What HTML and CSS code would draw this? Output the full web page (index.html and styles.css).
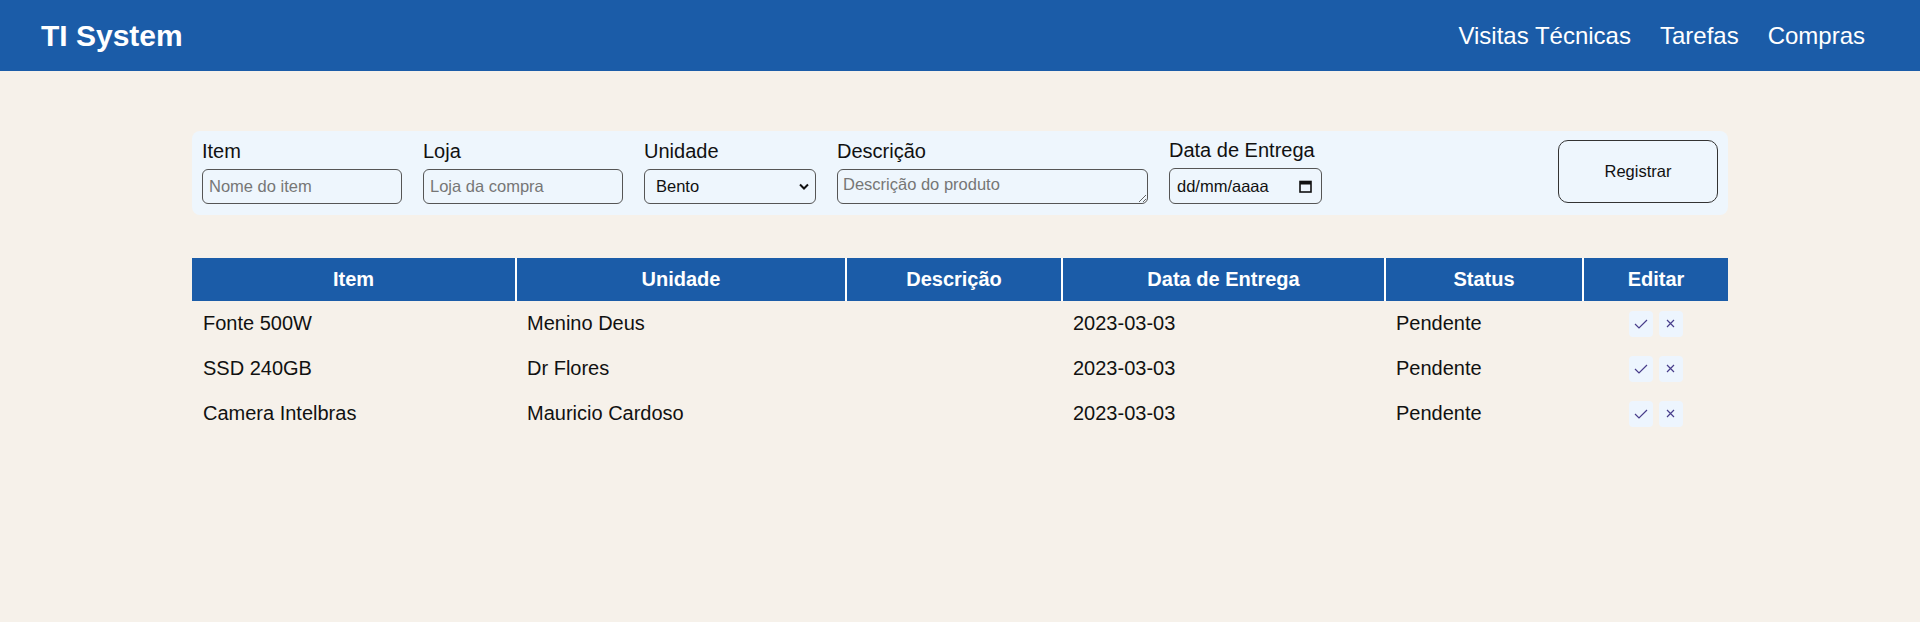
FILE: index.html
```html
<!DOCTYPE html>
<html lang="pt-BR">
<head>
<meta charset="utf-8">
<title>TI System</title>
<link rel="stylesheet" href="styles.css">
</head>
<body>
<header class="topbar">
  <h1 class="brand">TI System</h1>
  <nav class="nav">
    <a href="#">Visitas Técnicas</a>
    <a href="#">Tarefas</a>
    <a href="#">Compras</a>
  </nav>
</header>
<main class="container">
  <form class="panel">
    <div class="field">
      <label class="label">Item</label>
      <input class="control w-item" type="text" placeholder="Nome do item">
    </div>
    <div class="field">
      <label class="label">Loja</label>
      <input class="control w-loja" type="text" placeholder="Loja da compra">
    </div>
    <div class="field">
      <label class="label">Unidade</label>
      <span class="select-wrap">
        <select class="control w-unidade">
          <option>Bento</option>
          <option>Menino Deus</option>
          <option>Dr Flores</option>
          <option>Mauricio Cardoso</option>
        </select>
        <svg class="chev" width="10" height="7" viewBox="0 0 10 7"><polyline points="1,1.5 5,5.5 9,1.5" fill="none" stroke="#111" stroke-width="2"/></svg>
      </span>
    </div>
    <div class="field">
      <label class="label">Descrição</label>
      <textarea class="control textarea w-desc" placeholder="Descrição do produto"></textarea>
    </div>
    <div class="field">
      <label class="label">Data de Entrega</label>
      <span class="control date w-date">
        <span class="date-text">dd/mm/aaaa</span>
        <svg class="cal" width="13" height="13" viewBox="0 0 13 13"><rect x="1" y="1.5" width="11" height="10.5" fill="none" stroke="#111" stroke-width="1.6"/><rect x="1" y="1.5" width="11" height="3" fill="#111"/></svg>
      </span>
    </div>
    <button class="btn-register" type="button">Registrar</button>
  </form>

  <table class="table">
    <thead>
      <tr>
        <th class="c-item">Item</th>
        <th class="c-unidade">Unidade</th>
        <th class="c-desc">Descrição</th>
        <th class="c-data">Data de Entrega</th>
        <th class="c-status">Status</th>
        <th class="c-edit">Editar</th>
      </tr>
    </thead>
    <tbody>
      <tr>
        <td>Fonte 500W</td><td>Menino Deus</td><td></td><td>2023-03-03</td><td>Pendente</td>
        <td class="edit"><div class="actions">
          <button class="act" type="button"><svg width="14" height="10" viewBox="0 0 14 10"><polyline points="1,5 5,9 13,1" fill="none" stroke="#483d8b" stroke-width="1.2"/></svg></button>
          <button class="act" type="button"><svg width="9" height="9" viewBox="0 0 9 9"><path d="M1 1L8 8M8 1L1 8" stroke="#483d8b" stroke-width="1.2"/></svg></button>
        </div></td>
      </tr>
      <tr>
        <td>SSD 240GB</td><td>Dr Flores</td><td></td><td>2023-03-03</td><td>Pendente</td>
        <td class="edit"><div class="actions">
          <button class="act" type="button"><svg width="14" height="10" viewBox="0 0 14 10"><polyline points="1,5 5,9 13,1" fill="none" stroke="#483d8b" stroke-width="1.2"/></svg></button>
          <button class="act" type="button"><svg width="9" height="9" viewBox="0 0 9 9"><path d="M1 1L8 8M8 1L1 8" stroke="#483d8b" stroke-width="1.2"/></svg></button>
        </div></td>
      </tr>
      <tr>
        <td>Camera Intelbras</td><td>Mauricio Cardoso</td><td></td><td>2023-03-03</td><td>Pendente</td>
        <td class="edit"><div class="actions">
          <button class="act" type="button"><svg width="14" height="10" viewBox="0 0 14 10"><polyline points="1,5 5,9 13,1" fill="none" stroke="#483d8b" stroke-width="1.2"/></svg></button>
          <button class="act" type="button"><svg width="9" height="9" viewBox="0 0 9 9"><path d="M1 1L8 8M8 1L1 8" stroke="#483d8b" stroke-width="1.2"/></svg></button>
        </div></td>
      </tr>
    </tbody>
  </table>
</main>
</body>
</html>
```

FILE: styles.css
```css
* { box-sizing: border-box; }

html, body {
  margin: 0;
  padding: 0;
}

body {
  background: #f6f1ea;
  font-family: "Liberation Sans", Arial, sans-serif;
  color: #111;
}

.topbar {
  height: 71px;
  background: #1b5ca8;
  display: flex;
  align-items: center;
  justify-content: space-between;
  padding: 0 55px 0 41px;
}

.brand {
  margin: 0;
  font-size: 30px;
  font-weight: bold;
  color: #fff;
}

.nav {
  display: flex;
  gap: 29px;
}

.nav a {
  color: #fff;
  text-decoration: none;
  font-size: 24px;
}

.container {
  width: 1536px;
  margin: 60px auto 0;
}

.panel {
  display: flex;
  align-items: center;
  gap: 21px;
  padding: 8px 10px 11px;
  background: #eef6fd;
  border-radius: 8px;
}

.field {
  display: flex;
  flex-direction: column;
}

.label {
  font-size: 20px;
  line-height: 23px;
  margin-bottom: 6px;
  color: #111;
}

.control {
  height: 35px;
  border: 1px solid #555;
  border-radius: 6px;
  background: transparent;
  font-family: "Liberation Sans", Arial, sans-serif;
  font-size: 16.5px;
  color: #111;
  padding: 0 6px;
}

.control::placeholder {
  color: #767676;
}

.w-item { width: 200px; }
.w-loja { width: 200px; }
.w-desc { width: 311px; }
.w-date { width: 153px; height: 36px; }

.select-wrap {
  position: relative;
  display: block;
}

.w-unidade {
  width: 172px;
  padding: 0 24px 0 11px;
  appearance: none;
  -webkit-appearance: none;
  display: block;
}

.chev {
  position: absolute;
  right: 7px;
  top: 14px;
  pointer-events: none;
}

.textarea {
  padding: 5px 5px 2px;
  resize: vertical;
  display: block;
}

.date {
  display: flex;
  align-items: center;
  justify-content: space-between;
  padding: 0 9px 0 7px;
}

.cal { display: block; }

.btn-register {
  margin-left: auto;
  width: 160px;
  height: 63px;
  border: 1px solid #333;
  border-radius: 10px;
  background: transparent;
  font-family: "Liberation Sans", Arial, sans-serif;
  font-size: 16.5px;
  color: #111;
}

.table {
  width: 1536px;
  margin-top: 43px;
  border-collapse: collapse;
  table-layout: fixed;
}

.table th {
  background: #1b5ca8;
  color: #fff;
  font-size: 20px;
  font-weight: bold;
  line-height: 23px;
  padding: 10px;
  text-align: center;
}

.table th + th {
  border-left: 2px solid #fff;
}

.c-item { width: 324px; }
.c-unidade { width: 330px; }
.c-desc { width: 216px; }
.c-data { width: 323px; }
.c-status { width: 198px; }
.c-edit { width: 145px; }

.table td {
  font-size: 20px;
  line-height: 23px;
  padding: 11px 11px;
  color: #111;
}

.table td.edit {
  padding: 9px 11px;
}

.actions {
  display: flex;
  justify-content: center;
  gap: 6px;
}

.act {
  width: 24px;
  height: 26px;
  border: none;
  border-radius: 4px;
  background: #edf5fe;
  padding: 0;
  display: flex;
  align-items: center;
  justify-content: center;
}
```
